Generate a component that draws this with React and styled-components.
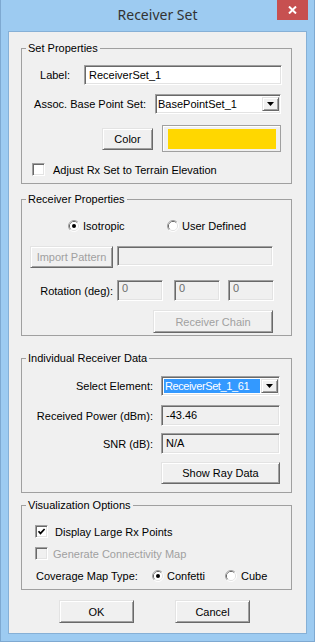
import React from 'react';
import styled, { createGlobalStyle, css } from 'styled-components';

const GlobalStyle = createGlobalStyle`
  html, body {
    margin: 0;
    padding: 0;
    background: #9dcbf1;
  }
  body {
    font-family: "Liberation Sans", Arial, sans-serif;
    font-size: 11px;
    color: #000;
  }
`;

// classic win32 3D edges
const sunken = css`
  border: 1px solid;
  border-color: #a0a0a0 #fff #fff #a0a0a0;
  box-shadow: inset 1px 1px 0 #696969, inset -1px -1px 0 #e3e3e3;
`;

const raised = css`
  border: 1px solid;
  border-color: #e3e3e3 #696969 #696969 #e3e3e3;
  box-shadow: inset 1px 1px 0 #fff, inset -1px -1px 0 #a0a0a0;
`;

const Window = styled.div`
  box-sizing: border-box;
  width: 315px;
  height: 642px;
  background: #9dcbf1;
  border: 1px solid #7ea9d1;
  border-top: none;
  display: flex;
  flex-direction: column;
`;

const TitleBar = styled.div`
  height: 31px;
  display: grid;
  grid-template-columns: 1fr auto 1fr;
  align-items: start;
`;

const Title = styled.div`
  grid-column: 2;
  font-family: "Noto Sans", "Open Sans", sans-serif;
  font-size: 14px;
  line-height: 30px;
  color: #333;
`;

const CloseButton = styled.div`
  grid-column: 3;
  justify-self: end;
  width: 31px;
  height: 20px;
  margin-right: 6px;
  background: #c75050;
  display: flex;
  align-items: center;
  justify-content: center;
`;

const Client = styled.div`
  box-sizing: border-box;
  height: 603px;
  margin: 0 7px;
  border: 1px solid #86b0d6;
  background: #f0f0f0;
  padding: 9px 0 0 12px;
  display: flex;
  flex-direction: column;
`;

const GroupBox = styled.fieldset`
  box-sizing: border-box;
  width: 271px;
  height: ${p => p.$h}px;
  margin: ${p => p.$mt || 0}px 0 0;
  padding: 0;
  min-width: 0;
  border: 1px solid #a0a0a0;
  display: flex;
  flex-direction: column;
`;

const Legend = styled.legend`
  margin-left: 4px;
  padding: 0 2px;
  line-height: 14px;
  font-size: 11px;
`;

const Row = styled.div`
  display: flex;
  align-items: ${p => p.$align || 'center'};
  height: ${p => p.$h}px;
  margin-top: ${p => p.$mt || 0}px;
  padding-left: ${p => p.$pl || 0}px;
  white-space: nowrap;
`;

const FieldLabel = styled.span`
  flex: none;
  width: ${p => p.$w}px;
  margin-right: ${p => p.$mr || 0}px;
  text-align: ${p => p.$align || 'right'};
  white-space: nowrap;
`;

const Text = styled.span`
  margin-left: ${p => p.$ml || 0}px;
  color: ${p => (p.$disabled ? '#a0a0a0' : '#000')};
`;

const TextBox = styled.div`
  box-sizing: border-box;
  flex: none;
  width: ${p => p.$w}px;
  height: ${p => p.$h}px;
  margin-left: ${p => p.$ml || 0}px;
  ${sunken};
  background: ${p => (p.$grey ? '#f0f0f0' : '#fff')};
  color: ${p => (p.$disabled ? '#6d6d6d' : '#000')};
  display: flex;
  align-items: ${p => (p.$top ? 'flex-start' : 'center')};
  padding: ${p => (p.$top ? '1px 0 0 4px' : '0 0 0 4px')};
  line-height: 13px;
`;

const Button = styled.div`
  box-sizing: border-box;
  flex: none;
  width: ${p => p.$w}px;
  height: ${p => p.$h || 23}px;
  margin-left: ${p => p.$ml || 0}px;
  ${raised};
  background: #f0f0f0;
  color: ${p => (p.$disabled ? '#a0a0a0' : '#000')};
  display: flex;
  align-items: center;
  justify-content: center;
`;

const Select = styled.div`
  box-sizing: border-box;
  flex: none;
  width: ${p => p.$w}px;
  height: 20px;
  ${sunken};
  background: #fff;
  display: flex;
  align-items: stretch;
  padding: 2px 1px 2px 2px;
`;

const SelectValue = styled.div`
  flex: 1;
  min-width: 0;
  overflow: hidden;
  display: flex;
  align-items: center;
  padding-left: ${p => (p.$selected ? 1 : 0)}px;
  margin-right: 1px;
  background: ${p => (p.$selected ? '#3399ff' : 'transparent')};
  color: ${p => (p.$selected ? '#fff' : '#000')};
  letter-spacing: ${p => (p.$selected ? '-0.4px' : 'normal')};
`;

const DropButton = styled.div`
  box-sizing: border-box;
  flex: none;
  width: 17px;
  ${raised};
  background: #f0f0f0;
  display: flex;
  align-items: center;
  justify-content: center;
`;

const Swatch = styled.div`
  box-sizing: border-box;
  width: 119px;
  height: 27px;
  margin-left: ${p => p.$ml || 0}px;
  border: 1px solid #a0a0a0;
  box-shadow: inset 1px 1px 0 #fff;
  background: #f0f0f0;
  padding: 3px 4px 2px 5px;
  display: flex;
`;

const SwatchFill = styled.div`
  flex: 1;
  background: ${p => p.$color};
`;

const CheckBox = styled.div`
  box-sizing: border-box;
  flex: none;
  width: 13px;
  height: 13px;
  ${sunken};
  background: ${p => (p.$disabled ? '#f0f0f0' : '#fff')};
  display: flex;
  align-items: center;
  justify-content: center;
`;

const RadioItem = styled.div`
  flex: none;
  width: ${p => (p.$w ? `${p.$w}px` : 'auto')};
  display: flex;
  align-items: center;
`;

function Radio({ checked }) {
  return (
    <svg width="12" height="12" viewBox="0 0 12 12" style={{ flex: 'none' }}>
      <path d="M2.11 9.89 A5.5 5.5 0 0 1 9.89 2.11" fill="none" stroke="#a0a0a0" />
      <path d="M9.89 2.11 A5.5 5.5 0 0 1 2.11 9.89" fill="none" stroke="#fff" />
      <path d="M2.82 9.18 A4.5 4.5 0 0 1 9.18 2.82" fill="none" stroke="#696969" />
      <path d="M9.18 2.82 A4.5 4.5 0 0 1 2.82 9.18" fill="none" stroke="#e3e3e3" />
      <circle cx="6" cy="6" r="4" fill="#fff" />
      {checked && <circle cx="6" cy="6" r="2" fill="#000" />}
    </svg>
  );
}

function Check({ checked, disabled }) {
  return (
    <CheckBox $disabled={disabled}>
      {checked && (
        <svg width="9" height="9" viewBox="0 0 9 9">
          <polyline points="1.5,4.2 3.5,6.4 7.6,2" fill="none" stroke="#000" strokeWidth="1.7" />
        </svg>
      )}
    </CheckBox>
  );
}

function Dropdown({ width, value, selected }) {
  return (
    <Select $w={width}>
      <SelectValue $selected={selected}>{value}</SelectValue>
      <DropButton>
        <svg width="7" height="4" viewBox="0 0 7 4">
          <polygon points="0,0 7,0 3.5,4" fill="#000" />
        </svg>
      </DropButton>
    </Select>
  );
}

export default function App() {
  return (
    <>
      <GlobalStyle />
      <Window>
        <TitleBar>
          <Title>Receiver Set</Title>
          <CloseButton>
            <svg width="9" height="8" viewBox="0 0 9 8">
              <path d="M1 0.5 L8 7.5 M8 0.5 L1 7.5" stroke="#fff" strokeWidth="2" />
            </svg>
          </CloseButton>
        </TitleBar>

        <Client>
          <GroupBox $h={143}>
            <Legend>Set Properties</Legend>
            <Row $mt={10} $h={20}>
              <FieldLabel $w={48} $mr={14}>Label:</FieldLabel>
              <TextBox $w={198} $h={20}>ReceiverSet_1</TextBox>
            </Row>
            <Row $mt={9} $h={20}>
              <FieldLabel $w={124} $mr={9}>Assoc. Base Point Set:</FieldLabel>
              <Dropdown width={126} value="BasePointSet_1" />
            </Row>
            <Row $mt={11} $h={27} $pl={80}>
              <Button $w={51} $h={22}>Color</Button>
              <Swatch $ml={9}>
                <SwatchFill $color="#ffd700" />
              </Swatch>
            </Row>
            <Row $mt={11} $h={13} $pl={10}>
              <Check />
              <Text $ml={8}>Adjust Rx Set to Terrain Elevation</Text>
            </Row>
          </GroupBox>

          <GroupBox $h={144} $mt={8}>
            <Legend>Receiver Properties</Legend>
            <Row $mt={14} $h={12} $pl={46}>
              <RadioItem $w={99}>
                <Radio checked />
                <Text $ml={3}>Isotropic</Text>
              </RadioItem>
              <RadioItem>
                <Radio />
                <Text $ml={3}>User Defined</Text>
              </RadioItem>
            </Row>
            <Row $mt={14} $h={22} $pl={8} $align="flex-start">
              <Button $w={83} $h={22} $disabled>Import Pattern</Button>
              <TextBox $w={156} $h={20} $ml={4} $grey />
            </Row>
            <Row $mt={12} $h={21}>
              <FieldLabel $w={91} $mr={4}>Rotation (deg):</FieldLabel>
              <TextBox $w={46} $h={21} $grey $disabled $top>0</TextBox>
              <TextBox $w={46} $h={21} $ml={11} $grey $disabled $top>0</TextBox>
              <TextBox $w={46} $h={21} $ml={8} $grey $disabled $top>0</TextBox>
            </Row>
            <Row $mt={9} $h={23} $pl={131}>
              <Button $w={120} $disabled>Receiver Chain</Button>
            </Row>
          </GroupBox>

          <GroupBox $h={142} $mt={15}>
            <Legend>Individual Receiver Data</Legend>
            <Row $mt={11} $h={20}>
              <FieldLabel $w={131} $mr={8}>Select Element:</FieldLabel>
              <Dropdown width={119} value="ReceiverSet_1_61" selected />
            </Row>
            <Row $mt={9} $h={21}>
              <FieldLabel $w={131} $mr={8}>Received Power (dBm):</FieldLabel>
              <TextBox $w={119} $h={21} $grey>-43.46</TextBox>
            </Row>
            <Row $mt={7} $h={21}>
              <FieldLabel $w={131} $mr={8}>SNR (dB):</FieldLabel>
              <TextBox $w={119} $h={21} $grey>N/A</TextBox>
            </Row>
            <Row $mt={8} $h={22} $pl={139}>
              <Button $w={119} $h={22}>Show Ray Data</Button>
            </Row>
          </GroupBox>

          <GroupBox $h={92} $mt={5}>
            <Legend>Visualization Options</Legend>
            <Row $mt={13} $h={13} $pl={13}>
              <Check checked />
              <Text $ml={7}>Display Large Rx Points</Text>
            </Row>
            <Row $mt={9} $h={13} $pl={13}>
              <Check disabled />
              <Text $ml={5} $disabled>Generate Connectivity Map</Text>
            </Row>
            <Row $mt={9} $h={13} $pl={14}>
              <FieldLabel $w={116} $align="left">Coverage Map Type:</FieldLabel>
              <RadioItem $w={73}>
                <Radio checked />
                <Text $ml={3}>Confetti</Text>
              </RadioItem>
              <RadioItem>
                <Radio />
                <Text $ml={4}>Cube</Text>
              </RadioItem>
            </Row>
          </GroupBox>

          <Row $mt={10} $h={23} $pl={38}>
            <Button $w={75}>OK</Button>
            <Button $w={75} $ml={41}>Cancel</Button>
          </Row>
        </Client>
      </Window>
    </>
  );
}
